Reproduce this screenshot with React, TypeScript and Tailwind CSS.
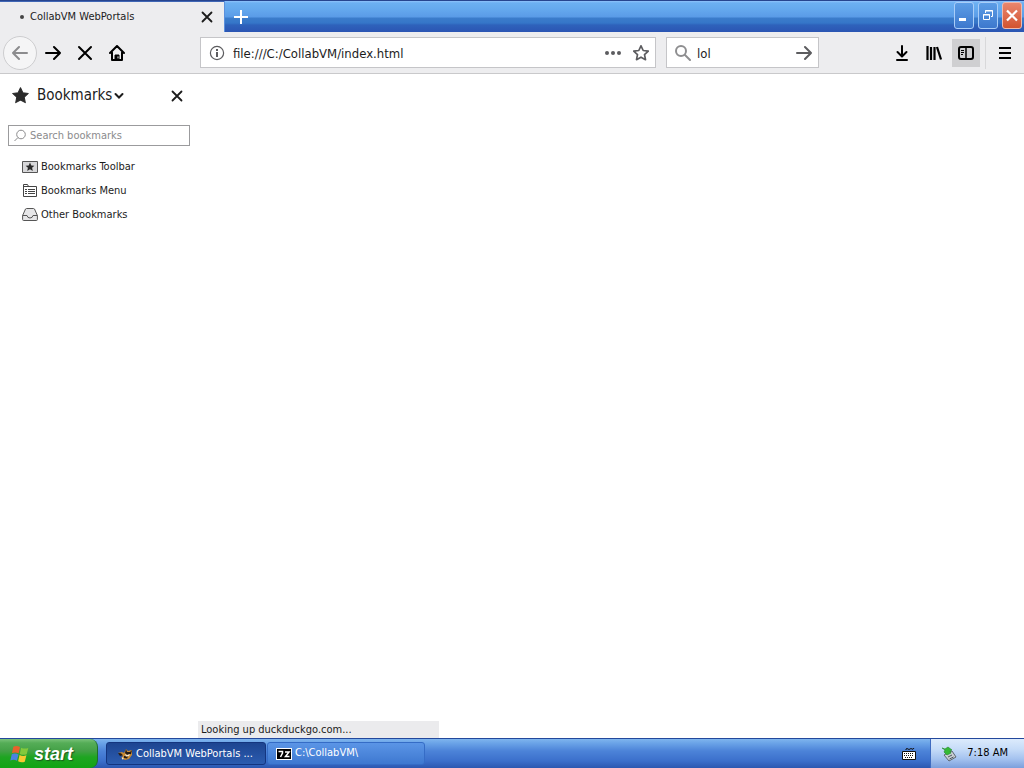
import React, { useState } from 'react';

const STAR = 'M8 0.8l2.2 4.7 5.1.6-3.8 3.5 1 5.1L8 12.2l-4.5 2.5 1-5.1L.7 6.1l5.1-.6z';

const CloseIcon = ({ className }: { className: string }) => (
    <svg viewBox="0 0 16 16" className={className} fill="none" stroke="currentColor" strokeWidth="2.4" strokeLinecap="round">
        <path d="M2 2l12 12M14 2L2 14" />
    </svg>
);

const ArrowIcon = ({ className }: { className: string }) => (
    <svg viewBox="0 0 16 16" className={className} fill="none" stroke="currentColor" strokeWidth="2" strokeLinecap="round" strokeLinejoin="round">
        <path d="M1 8h14M9 2l6 6-6 6" />
    </svg>
);

const TabStrip = () => {
    return (
        <header className="flex h-8 border-t border-[#27458f] bg-[linear-gradient(#8fc3fb_0px,#6cb0f2_2px,#65a9ee_8px,#5a9be7_16px,#3b7ccb_17px,#3576c8_22px,#2e62bb_24px,#2b55b3_100%)]">
            <div className="flex w-56 items-center border-t border-[#3f66b5] bg-[#ededef] pl-5 pr-[11px]">
                <span className="mr-1.5 size-1 rounded-full bg-[#444444]"></span>
                <span className="flex-1 whitespace-nowrap pt-px text-[11px]">CollabVM WebPortals</span>
                <button aria-label="Close tab"><CloseIcon className="size-3" /></button>
            </div>
            <button aria-label="New tab" className="flex w-8 items-center justify-center border-l border-[#5b90dc] text-white">
                <svg viewBox="0 0 14 14" className="size-3.5" stroke="currentColor" strokeWidth="2">
                    <path d="M7 0v14M0 7h14" />
                </svg>
            </button>
            <div className="ml-auto flex gap-1 py-px pr-0.5 text-white">
                <button aria-label="Minimize" className="h-[27px] w-5 rounded-[3px] border border-[#a9cdf8] bg-linear-to-b from-[#5c9de6] to-[#3d78cd]">
                    <svg viewBox="0 0 18 25" className="h-full w-full"><path d="M4 15h7v3H4z" fill="#fff" /></svg>
                </button>
                <button aria-label="Restore" className="h-[27px] w-5 rounded-[3px] border border-[#a9cdf8] bg-linear-to-b from-[#5c9de6] to-[#3d78cd]">
                    <svg viewBox="0 0 18 25" className="h-full w-full" fill="none" stroke="#fff">
                        <path d="M6.5 10V7.500h7v6H12M6 8h8M4.500 11.500h6v5h-6zM4 12h7" />
                    </svg>
                </button>
                <button aria-label="Close window" className="h-[27px] w-5 rounded-[3px] border border-[#f0b9ad] bg-linear-to-b from-[#e9866d] to-[#d2532f]">
                    <svg viewBox="0 0 18 25" className="h-full w-full" stroke="#fff" strokeWidth="2.2">
                        <path d="M4 7.500l10 10M14 7.500l-10 10" />
                    </svg>
                </button>
            </div>
        </header>
    );
};

const NavBar = () => {
    const [url, setUrl] = useState('file:///C:/CollabVM/index.html');
    const [query, setQuery] = useState('lol');

    return (
        <nav className="flex h-[42px] items-center border-b border-[#c9c9cb] bg-[#ededef] px-[3px] text-black">
            <button aria-label="Back" className="flex size-[34px] items-center justify-center rounded-full border border-[#cdcdcf] bg-[#f5f5f6] text-[#8c8c8e]">
                <ArrowIcon className="size-4 rotate-180" />
            </button>
            <button aria-label="Forward" className="flex w-8 justify-center"><ArrowIcon className="size-4" /></button>
            <button aria-label="Stop" className="flex w-8 justify-center">
                <svg viewBox="0 0 16 16" className="size-4" stroke="currentColor" strokeWidth="2" strokeLinecap="round">
                    <path d="M2 2l12 12M14 2L2 14" />
                </svg>
            </button>
            <button aria-label="Home" className="flex w-8 justify-center">
                <svg viewBox="0 0 16 16" className="size-4" fill="none" stroke="currentColor" strokeWidth="2" strokeLinejoin="round" strokeLinecap="round">
                    <path d="M1 8l7-7 7 7M3 7.500V15h10V7.500" />
                    <path d="M6 15v-5h4v5z" fill="currentColor" strokeWidth="1" />
                    <path d="M9 11.800v1.200" stroke="#ededef" strokeWidth="1" />
                </svg>
            </button>
            <div className="w-[67px]"></div>
            <div className="flex h-[31px] flex-1 items-center border border-[#c5c5c8] bg-white pl-2 pr-1.5 text-[#5c5c5f]">
                <svg viewBox="0 0 16 16" className="size-4" fill="none" stroke="currentColor">
                    <circle cx="8" cy="8" r="6.600" strokeWidth="1.200" />
                    <path d="M8 7v5" strokeWidth="2" />
                    <path d="M8 4v2" strokeWidth="2" />
                </svg>
                <input aria-label="Address" value={url} onChange={(e) => setUrl(e.target.value)} className="ml-2 min-w-0 flex-1 pt-0.5 text-[13px] text-[#1c1c1c] outline-none" />
                <button aria-label="Page actions" className="mr-3">
                    <svg viewBox="0 0 16 16" className="size-4" fill="currentColor">
                        <circle cx="2" cy="8" r="2" /><circle cx="8" cy="8" r="2" /><circle cx="14" cy="8" r="2" />
                    </svg>
                </button>
                <button aria-label="Bookmark this page">
                    <svg viewBox="0 0 16 16" className="size-4" fill="none" stroke="currentColor" strokeWidth="1.700" strokeLinejoin="round"><path d={STAR} /></svg>
                </button>
            </div>
            <div className="ml-2.5 flex h-[31px] w-[153px] items-center border border-[#c5c5c8] bg-white pl-2 pr-1.5">
                <svg viewBox="0 0 16 16" className="size-4 text-[#8e8e90]" fill="none" stroke="currentColor" strokeWidth="2" strokeLinecap="round">
                    <circle cx="6" cy="6" r="5" /><path d="M10 10l5 5" />
                </svg>
                <input aria-label="Search" value={query} onChange={(e) => setQuery(e.target.value)} className="ml-1.5 min-w-0 flex-1 pt-0.5 text-[13px] text-[#1c1c1c] outline-none" />
                <button aria-label="Go" className="text-[#5c5c5f]"><ArrowIcon className="size-4" /></button>
            </div>
            <div className="w-[67px]"></div>
            <button aria-label="Downloads" className="flex w-8 justify-center">
                <svg viewBox="0 0 16 16" className="size-4" fill="none" stroke="currentColor" strokeWidth="2" strokeLinecap="round" strokeLinejoin="round">
                    <path d="M8 1v10M3.500 7L8 11.500 12.500 7M3 15h10" />
                </svg>
            </button>
            <button aria-label="Library" className="flex w-8 justify-center">
                <svg viewBox="0 0 16 16" className="size-4" fill="none" stroke="currentColor" strokeWidth="2.2">
                    <path d="M1.500 1v14M5 2v13M8.500 2v13M11 2l4 12.500" />
                </svg>
            </button>
            <button aria-label="Sidebars" className="mx-0.5 flex size-7 items-center justify-center bg-[#cfcfd1]">
                <svg viewBox="0 0 16 16" className="size-4" fill="none" stroke="currentColor">
                    <rect x="1" y="2" width="14" height="12" rx="2" strokeWidth="2" />
                    <path d="M8 2v12" strokeWidth="1.500" /><path d="M3 5.500h3M3 7.500h3M3 9.500h2" />
                </svg>
            </button>
            <div className="mx-[3px] h-8 w-px bg-[#d8d8da]"></div>
            <button aria-label="Menu" className="flex w-8 justify-center">
                <svg viewBox="0 0 16 16" className="size-4" stroke="currentColor" strokeWidth="2"><path d="M2 3h12M2 8h12M2 13h12" /></svg>
            </button>
        </nav>
    );
};

const Sidebar = () => {
    return (
        <aside className="w-[198px] px-2">
            <div className="flex h-[43px] items-center pl-1 pr-[7px]">
                <svg viewBox="0 0 16 16" className="mr-2 size-[17px]" fill="#2b2b2b" stroke="#2b2b2b" strokeLinejoin="round"><path d={STAR} /></svg>
                <button className="flex items-center text-[15px]">
                    Bookmarks
                    <svg viewBox="0 0 10 10" className="ml-0.5 size-2.5" fill="none" stroke="currentColor" strokeWidth="2" strokeLinecap="round"><path d="M1.500 3L5 6.500 8.500 3" /></svg>
                </button>
                <button aria-label="Close sidebar" className="ml-auto"><CloseIcon className="size-3" /></button>
            </div>
            <div className="mt-2 flex h-[21px] items-center border border-[#9b9b9d] pl-1">
                <svg viewBox="0 0 14 14" className="mr-[3px] size-3.5" fill="none" stroke="#8b8b8d"><circle cx="8" cy="5.500" r="4.300" /><path d="M5 8.500L1.500 12" /></svg>
                <input type="search" aria-label="Search bookmarks" placeholder="Search bookmarks" className="min-w-0 flex-1 pt-px text-[11px] outline-none placeholder:text-[#8b8b8d]" />
            </div>
            <ul className="mt-[9px] pl-3.5 text-[11px]">
                <li className="flex h-6 items-center gap-[3px]">
                    <svg viewBox="0 0 16 16" className="size-4">
                        <path d="M.5 2.500h15v11H.5z" fill="#d8d8da" stroke="#555" />
                        <path d="M8 3.500l1.300 2.900 3.100.3-2.300 2.100.7 3.100L8 10.300l-2.800 1.600.7-3.100-2.300-2.100 3.100-.3z" fill="#2b2b2b" />
                    </svg>
                    Bookmarks Toolbar
                </li>
                <li className="flex h-6 items-center gap-[3px]">
                    <svg viewBox="0 0 16 16" className="size-4" fill="none" stroke="#444">
                        <path d="M1.500 13.500v-12h4l1 2h8v10zM1.500 3.500h6" />
                        <path d="M3 6.500h2M6 6.500h7M3 8.500h2M6 8.500h7M3 10.500h2M6 10.500h7" />
                    </svg>
                    Bookmarks Menu
                </li>
                <li className="flex h-6 items-center gap-[3px]">
                    <svg viewBox="0 0 16 16" className="size-4" fill="#e6e6e8" stroke="#555" strokeLinejoin="round">
                        <path d="M.6 8.500L3.500 2q.3-.5 1-.5h7q.7 0 1 .5l2.900 6.500v4q0 1-1 1H1.600q-1 0-1-1z" />
                        <path d="M.6 8.500H5q.5 2.500 3 2.500t3-2.500h4.400" fill="none" />
                    </svg>
                    Other Bookmarks
                </li>
            </ul>
        </aside>
    );
};

const Taskbar = () => {
    return (
        <footer className="flex h-[30px] border-t border-[#23489c] bg-[linear-gradient(#7fb5ee_0px,#6ba4e8_4px,#4c83d8_12px,#3b6fcb_22px,#2c57b0_100%)] text-[11px] text-white">
            <button className="flex w-[98px] items-center rounded-r-lg border-r border-[#1f6d2a] bg-[linear-gradient(#7ac27a_0px,#55ad57_4px,#43a046_12px,#1fa522_18px,#12a414_100%)] pl-2.5">
                <svg viewBox="0 0 18 18" className="size-5">
                    <path d="M3 2.500q3-1.500 6 .3L7.800 8.400q-3-1.500-6-.2z" fill="#e8622c" />
                    <path d="M10 3.300q3 1.600 6.500.2L15 9.200q-3 1.200-6.200-.3z" fill="#83c93c" />
                    <path d="M1.600 9.200q3-1.300 6 .2L6.300 15q-3-1.500-6-.2z" fill="#4b83e0" />
                    <path d="M8.600 9.900q3 1.500 6.200.3L13.300 16q-3 1.200-6-.4z" fill="#f7c931" />
                </svg>
                <span className="ml-1 font-[Liberation_Sans,sans-serif] text-[18px] font-bold italic leading-5 [text-shadow:1px_1px_1px_#1c5a1e]">start</span>
            </button>
            <button className="my-[3px] ml-2 flex w-40 items-center rounded-[3px] border border-[#14357f] bg-linear-to-b from-[#1d4591] to-[#2c5cb0] pl-2.5 pt-px">
                <svg viewBox="0 0 16 16" className="mr-[3px] size-4">
                    <path d="M1 7l4-1 2 1 2-4 2 2 4-1v5l-3 4-4 1-4-2 2-2z" fill="#c98b35" />
                    <path d="M1 7l3 .2 2 2-3 .8zM9 3l1 3 3 0 2-2-1 4-4 1-2-2zM7 10l4 .5-1 2-3-.5z" fill="#241b16" />
                    <path d="M8 8l2 1 3-1-1 2-3 .4zM5 11l2 2-2 .5z" fill="#f5ead4" />
                </svg>
                CollabVM WebPortals ...
            </button>
            <button className="my-[3px] ml-px flex w-[158px] items-center rounded-[3px] border border-[#356cc6] bg-linear-to-b from-[#5b95e6] to-[#3e78d0] pl-2">
                <svg viewBox="0 0 16 16" className="mr-[3px] size-4">
                    <path d="M0 2h16v12H0z" fill="#fff" /><path d="M1 3h14v10H1z" fill="#000" />
                    <path d="M2.500 5.500h4v1.500L4.500 11M9 6h4L9.500 10.500h4" fill="none" stroke="#fff" strokeWidth="1.500" />
                </svg>
                C:\CollabVM\
            </button>
            <button aria-label="On-screen keyboard" className="ml-auto mr-3.5 flex items-center">
                <svg viewBox="0 0 14 14" className="size-3.5">
                    <path d="M4 3V2q1-1 2 0t2 0 2 0 2-1" fill="none" stroke="#111" />
                    <path d="M.5 4.500h13v8H.5z" fill="#fff" stroke="#111" />
                    <path d="M2 6.500h10M2 8.500h10M3 10.500h8" stroke="#111" strokeDasharray="1 1" />
                </svg>
            </button>
            <div className="flex items-center border-l border-[#3f6bc0] bg-[linear-gradient(#dcebfc_0px,#c6dcf8_10px,#a4c2ef_20px,#7c9fdc_100%)] pl-2.5 pr-4 text-black">
                <svg viewBox="0 0 16 16" className="mr-2.5 size-4">
                    <path d="M3 9l8-4 4 6-7 4z" fill="#c9ced3" stroke="#5b6670" />
                    <path d="M7 11l4-2M8.500 13l4-2" stroke="#4c5660" />
                    <path d="M1 2l3 1 3-2 4 3-2 1 1 2-4 2-3-3 1-2z" fill="#35b936" stroke="#1c8724" strokeWidth=".6" />
                </svg>
                7:18 AM
            </div>
        </footer>
    );
};

const App = () => {
    return (
        <div className="flex min-h-screen flex-col bg-white font-[DejaVu_Sans_Condensed,Noto_Sans,sans-serif] text-[#1c1c1c]">
            <TabStrip />
            <NavBar />
            <div className="flex flex-1">
                <Sidebar />
                <main className="flex flex-1 items-end">
                    <p className="h-[17px] w-[241px] bg-[#ebebed] pl-[3px] text-[11px] leading-[18px]">Looking up duckduckgo.com...</p>
                </main>
            </div>
            <Taskbar />
        </div>
    );
};

export default App;
